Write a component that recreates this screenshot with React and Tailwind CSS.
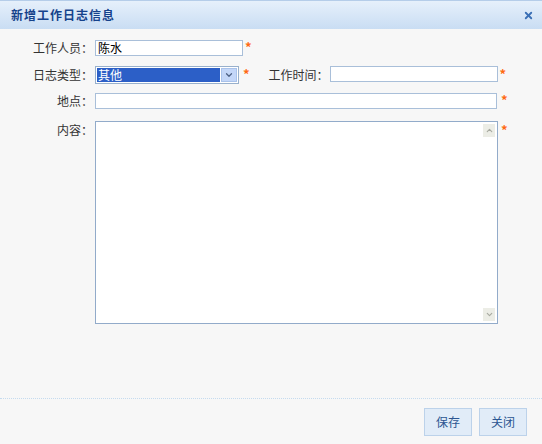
import { X, ChevronDown, ChevronUp } from "lucide-react";

const font = { fontFamily: '"SimSun", "Noto Sans CJK SC", sans-serif' };

function Star() {
  return <span className="block text-[#ff6a13] text-[13px] font-bold leading-[12px]">*</span>;
}

function Label({ children, className = "" }) {
  return (
    <span className={`text-[12px] leading-[16px] text-[#333] text-right shrink-0 ${className}`}>
      {children}
    </span>
  );
}

export default function App() {
  return (
    <div className="w-[542px] h-[444px] bg-[#f7f7f7] flex flex-col" style={font}>
      {/* Header */}
      <div className="h-[29px] shrink-0 flex items-center justify-between pl-[11px] pr-[8px] bg-gradient-to-b from-[#e6f0fb] to-[#c9ddf3] border-t border-[#b5cde9]">
        <span className="text-[12px] font-bold text-[#15428b] tracking-[1px]">新增工作日志信息</span>
        <X className="w-[11px] h-[11px] text-[#3a6fb5]" strokeWidth={4} />
      </div>

      {/* Body */}
      <div className="flex-1 flex flex-col pt-[11px]">
        <div className="flex items-start h-[16px]">
          <Label className="w-[93px]">工作人员：</Label>
          <div className="ml-[2px] w-[148px] h-[16px] bg-white border border-[#a9bfd9] text-[12px] leading-[14px] text-black pl-[2px]">
            陈水
          </div>
          <span className="ml-[2px] mt-[1px]"><Star /></span>
        </div>

        <div className="flex items-start mt-[10px] h-[18px]">
          <Label className="w-[93px] mt-[1px]">日志类型：</Label>
          <div className="ml-[2px] w-[144px] h-[18px] bg-white border border-[#98b0cc] flex items-center pl-[1px] pr-[1px]">
            <div className="flex-1 h-[14px] bg-[#2c5fc7] text-white text-[12px] leading-[14px] pl-[1px]">其他</div>
            <div className="ml-[1px] w-[16px] h-[14px] bg-[#c3d6f8] border border-[#a9c2ea] flex items-center justify-center">
              <ChevronDown className="w-[10px] h-[10px] text-[#4d6185]" strokeWidth={3} />
            </div>
          </div>
          <span className="ml-[4px] mt-[2px]"><Star /></span>
          <Label className="ml-[19px] mt-[1px]">工作时间：</Label>
          <div className="ml-[1px] w-[168px] h-[16px] bg-white border border-[#a9bfd9]" />
          <span className="ml-[2px] mt-[2px]"><Star /></span>
        </div>

        <div className="flex items-start mt-[9px] h-[16px]">
          <Label className="w-[93px]">地点：</Label>
          <div className="ml-[2px] w-[402px] h-[16px] bg-white border border-[#a9bfd9]" />
          <span className="ml-[4px] mt-[1px]"><Star /></span>
        </div>

        <div className="flex items-start mt-[12px]">
          <Label className="w-[93px] mt-[1px]">内容：</Label>
          <div className="ml-[2px] w-[403px] h-[203px] bg-white border border-[#92abca] flex justify-end p-[2px]">
            <div className="w-[12px] flex flex-col justify-between">
              <div className="h-[13px] bg-[#ecede6] flex items-center justify-center">
                <ChevronUp className="w-[9px] h-[9px] text-[#a8aaa0]" strokeWidth={3} />
              </div>
              <div className="h-[13px] bg-[#ecede6] flex items-center justify-center">
                <ChevronDown className="w-[9px] h-[9px] text-[#a8aaa0]" strokeWidth={3} />
              </div>
            </div>
          </div>
          <span className="ml-[3px] mt-[3px]"><Star /></span>
        </div>
      </div>

      {/* Footer */}
      <div className="h-[46px] shrink-0 border-t border-dotted border-[#c5dbef] flex items-start justify-end gap-[7px] pt-[9px] pr-[15px]">
        <button className="w-[48px] h-[28px] bg-[#e1ecf8] border border-[#bcd2ea] text-[12px] text-[#2b5591]">保存</button>
        <button className="w-[48px] h-[28px] bg-[#e1ecf8] border border-[#bcd2ea] text-[12px] text-[#2b5591]">关闭</button>
      </div>
    </div>
  );
}
